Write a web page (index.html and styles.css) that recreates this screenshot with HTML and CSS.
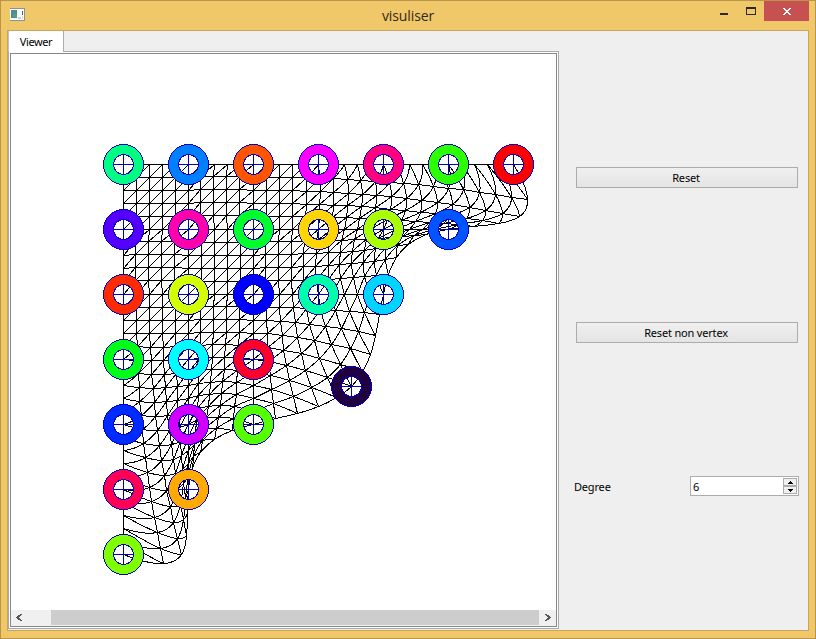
FILE: index.html
```html
<!DOCTYPE html>
<html lang="en">
<head>
<meta charset="utf-8">
<title>visuliser</title>
<link rel="stylesheet" href="styles.css">
</head>
<body>
<div class="window">
  <header class="titlebar">
    <svg class="app-icon" width="16" height="14" viewBox="0 0 16 14" shape-rendering="crispEdges">
      <rect x="0" y="0" width="15" height="13" fill="#8a938f"/>
      <rect x="0" y="1" width="14" height="11" fill="#fbfbfb"/>
      <rect x="1" y="2" width="6" height="8" fill="#4c8d8c"/>
      <rect x="2" y="3" width="3" height="3" fill="#5b87a0"/>
      <rect x="3" y="6" width="4" height="3" fill="#55a080"/>
      <rect x="8" y="9" width="3" height="2" fill="#c9ccd3"/>
      <rect x="12" y="3" width="1" height="4" fill="#3c6278"/>
      <rect x="12" y="8" width="1" height="3" fill="#d5d8de"/>
    </svg>
    <h1 class="title">visuliser</h1>
    <div class="controls">
      <svg class="min-max" width="44" height="20" viewBox="0 0 44 20" shape-rendering="crispEdges">
        <path d="M0 12h8v2H0z" fill="#2f2817"/>
        <path d="M26 6h10v8H26z M27 8v5h8V8z" fill="#2f2817" fill-rule="evenodd"/>
      </svg>
      <div class="close">
        <svg width="8" height="7" viewBox="0 0 8 7" shape-rendering="crispEdges">
          <path d="M0 0h2v1H0zM6 0h2v1H6zM1 1h2v1H1zM5 1h2v1H5zM2 2h4v1H2zM3 3h2v1H3zM2 4h4v1H2zM1 5h2v1H1zM5 5h2v1H5zM0 6h2v1H0zM6 6h2v1H6z" fill="#fff"/>
        </svg>
      </div>
    </div>
  </header>
  <main class="client">
    <section class="tabs">
      <div class="tab">Viewer</div>
      <div class="pane">
        <div class="viewer">
          <svg id="scene" class="scene" width="545" height="556" viewBox="11 54 545 556"></svg>
          <div class="scrollbar">
            <div class="arrow"><svg width="6" height="7" viewBox="0 0 6 7" shape-rendering="crispEdges"><path d="M4 0h2v1H4zM2 1h3v1H2zM1 2h3v1H1zM0 3h3v1H0zM1 4h3v1H1zM2 5h3v1H2zM4 6h2v1H4z" fill="#555"/></svg></div>
            <div class="thumb"></div>
            <div class="arrow arrow-right"><svg width="6" height="7" viewBox="0 0 6 7" shape-rendering="crispEdges"><path d="M0 0h2v1H0zM1 1h3v1H1zM2 2h3v1H2zM3 3h3v1H3zM2 4h3v1H2zM1 5h3v1H1zM0 6h2v1H0z" fill="#555"/></svg></div>
          </div>
        </div>
      </div>
    </section>
    <aside class="panel">
      <button class="btn">Reset</button>
      <button class="btn btn-second">Reset non vertex</button>
      <div class="field">
        <span class="label">Degree</span>
        <div class="spin">
          <span class="value">6</span>
          <div class="steps">
            <span class="step"><svg width="5" height="3" viewBox="0 0 5 3" shape-rendering="crispEdges"><path d="M2 0h1v1H2zM1 1h3v1H1zM0 2h5v1H0z"/></svg></span>
            <span class="step"><svg width="5" height="3" viewBox="0 0 5 3" shape-rendering="crispEdges"><path d="M0 0h5v1H0zM1 1h3v1H1zM2 2h1v1H2z"/></svg></span>
          </div>
        </div>
      </div>
    </aside>
  </main>
</div>
<script src="mesh.js"></script>
</body>
</html>
```
FILE: styles.css
```css
* { box-sizing: border-box; }
body { margin: 0; overflow: hidden; font-family: "Noto Sans", sans-serif; font-size: 11px; letter-spacing: -0.18px; color: #000; }
svg { display: block; }
.window { width: 816px; height: 639px; border: 1px solid #b9954c; background: #f0c869; padding: 0 6px 7px; display: flex; flex-direction: column; }
.titlebar { height: 29px; flex: none; display: grid; grid-template-columns: 128px 1fr 128px; }
.app-icon { margin: 7px 0 0 3px; }
.title { margin: 5px 0 0; text-align: center; font: 400 14px/20px "Open Sans", sans-serif; letter-spacing: -0.1px; color: #33291a; }
.controls { display: flex; justify-content: flex-end; }
.min-max { flex: none; }
.close { width: 45px; height: 20px; flex: none; background: #c75050; display: flex; align-items: center; justify-content: center; padding-top: 1px; }
.client { flex: 1; display: flex; background: #efefef; border: 1px solid #c5a55f; min-height: 0; }
.tabs { width: 551px; flex: none; display: flex; flex-direction: column; align-items: flex-start; padding-bottom: 1px; }
.tab { width: 56px; height: 21px; flex: none; background: #fff; border-right: 1px solid #acacac; border-left: 1px solid #c0c0c0; text-align: center; line-height: 21px; letter-spacing: -0.4px; margin-bottom: -1px; position: relative; z-index: 1; }
.pane { width: 551px; flex: 1; border: 1px solid #a9a9a9; background: #fff; padding: 1px; min-height: 0; }
.viewer { width: 547px; height: 574px; border: 1px solid #828790; background: #fff; }
.scene { width: 545px; height: 556px; }
.scrollbar { height: 16px; display: flex; background: #f0f0f0; }
.arrow { width: 40px; padding: 4px 0 0 5px; }
.arrow-right { width: 17px; padding-left: 6px; }
.thumb { flex: 1; height: 15px; background: #cdcdcd; }
.panel { flex: 1; display: flex; flex-direction: column; padding: 136px 9px 0 15px; }
.btn { width: 222px; height: 21px; margin: 0 0 0 2px; padding: 0 2px 1px 0; border: 1px solid #acacac; background: linear-gradient(#f0f0f0, #e4e4e4); font: inherit; letter-spacing: inherit; color: #000; }
.btn-second { margin-top: 134px; }
.field { display: flex; justify-content: space-between; align-items: center; width: 225px; margin-top: 133px; height: 20px; }
.spin { width: 109px; height: 20px; display: flex; justify-content: space-between; border: 1px solid #abadb3; background: #fff; padding: 1px 1px 1px 2px; line-height: 17px; }
.steps { width: 14px; display: flex; flex-direction: column; }
.step { height: 8px; border: 1px solid #acacac; background: #f0f0f0; display: flex; align-items: center; justify-content: center; }
```
FILE: mesh.js
```javascript
const DEGREE = 6, SPACING = 65, STEPS = 30, OX = 123, OY = 164, SUB = 5;
const colours = [
  ["#00ff80", "#0080ff", "#ff5500", "#ff00ff", "#ff0080", "#2bff00", "#ff0000"],
  ["#5500ff", "#ff00aa", "#00ff2b", "#ffd500", "#aaff00", "#0055ff"],
  ["#ff2b00", "#d4ff00", "#0000ff", "#00ffaa", "#00d4ff"],
  ["#00ff15", "#00ffff", "#ff002b", "#200040"],
  ["#002bff", "#d400ff", "#55ff00"],
  ["#ff0055", "#ffaa00"],
  ["#80ff00"]
];
const moved = { row: 3, col: 3, dx: 33, dy: 27 };
const basis = t => t * (t - 1) * (t - 2) / 6;

function surface([i, j]) {
  const w = basis(i * DEGREE / STEPS) * basis(j * DEGREE / STEPS);
  return [
    OX + j * SPACING * DEGREE / STEPS + w * moved.dx,
    OY + i * SPACING * DEGREE / STEPS + w * moved.dy
  ];
}
const snap = p => p.map(v => Math.floor(v + 1e-6) + 0.5);
const mix = (a, b, t) => a.map((v, k) => v + (b[k] - v) * t);

// One mesh edge: snapped end points, with the surface's curvature in between.
function edge(a, b) {
  const pa = surface(a), pb = surface(b), sa = snap(pa), sb = snap(pb);
  let d = "M" + sa;
  for (let k = 1; k < SUB; k++) {
    const t = k / SUB, p = surface(mix(a, b, t)), flat = mix(pa, pb, t), base = mix(sa, sb, t);
    d += "L" + base.map((v, n) => (v + p[n] - flat[n]).toFixed(2));
  }
  return d + "L" + sb;
}

let mesh = "";
for (let i = 0; i < STEPS; i++) {
  for (let j = 0; i + j < STEPS; j++) {
    mesh += edge([i, j], [i, j + 1]) + edge([i, j + 1], [i + 1, j]) + edge([i + 1, j], [i, j]);
  }
}
let out = `<path d="${mesh}" fill="none" stroke="#000" shape-rendering="crispEdges"/>`;
colours.forEach((row, r) => row.forEach((colour, c) => {
  const shifted = r === moved.row && c === moved.col;
  const x = OX + c * SPACING + (shifted ? moved.dx : 0) + 0.5;
  const y = OY + r * SPACING + (shifted ? moved.dy : 0) + 0.5;
  out += `<g transform="translate(${x} ${y})" fill="none" shape-rendering="crispEdges">
    <circle r="15" stroke="${colour}" stroke-width="10"/>
    <g stroke="#0000c4"><circle r="20"/><circle r="10"/><path d="M-10 0H10M0-10V10"/></g></g>`;
}));
document.getElementById("scene").innerHTML = out;
```
